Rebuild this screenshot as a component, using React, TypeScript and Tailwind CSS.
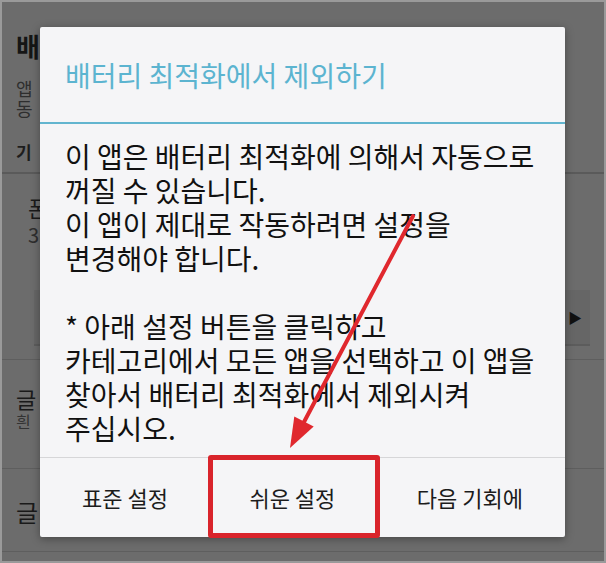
import React from "react";

const KR = { fontFamily: '"Noto Sans CJK KR", "Noto Sans", sans-serif' };

export default function App() {
  return (
    <div
      className="relative w-[606px] h-[563px] overflow-hidden bg-[#6c6c6c] border-2 border-[#9a9a9a]"
      style={KR}
    >
      {/* background page (dimmed) */}
      <div className="flex flex-col">
        <div className="pl-[14px] pt-[26px] pb-[10px] flex flex-col">
          <div className="text-[26px] font-bold leading-[36px] text-[#151515]">배</div>
          <div className="text-[18px] leading-[20px] text-[#2e2e2e] mt-[14px]">앱</div>
          <div className="text-[18px] leading-[20px] text-[#2e2e2e]">동</div>
          <div className="text-[17px] font-bold leading-[20px] text-[#1d1d1d] mt-[24px]">기</div>
        </div>
        <div className="h-[2px] bg-[#5a5a5a]" />
        <div className="pl-[26px] pr-[14px] pt-[18px] flex flex-col">
          <div className="text-[22px] leading-[30px] text-[#1a1a1a]">폰</div>
          <div className="text-[20px] leading-[26px] text-[#2e2e2e]">3</div>
          <div className="mt-[42px] ml-[6px] h-[56px] bg-[#666666] border-b-2 border-[#5c5c5c] flex items-center justify-end pr-[8px]">
            <span className="text-[14px] text-[#111]">▶</span>
          </div>
        </div>
        <div className="mt-[13px] h-[1px] bg-[#5e5e5e]" />
        <div className="pl-[14px] pt-[24px] pb-[38px] flex flex-col">
          <div className="text-[22px] leading-[28px] text-[#1a1a1a]">글</div>
          <div className="text-[16px] leading-[18px] text-[#333]">흰</div>
        </div>
        <div className="h-[1px] bg-[#5e5e5e]" />
        <div className="pl-[14px] pt-[28px] pb-[24px]">
          <div className="text-[24px] leading-[30px] text-[#1a1a1a]">글</div>
        </div>
        <div className="h-[1px] bg-[#5e5e5e]" />
      </div>

      {/* dialog */}
      <div className="absolute left-[38px] top-[25px] w-[525px] h-[510px] bg-[#f5f5f7] rounded-[2px] shadow-[0_2px_8px_rgba(0,0,0,0.35)] flex flex-col">
        <div className="h-[95px] flex items-center pl-[25px]">
          <span className="text-[28px] leading-[32px] text-[#5cb4d0]">배터리 최적화에서 제외하기</span>
        </div>
        <div className="h-[2px] bg-[#62b5cf]" />
        <div className="pt-[15px] pb-[12px] pl-[25px] text-[28px] leading-[34px] text-[#111111]">
          <div>이 앱은 배터리 최적화에 의해서 자동으로</div>
          <div>꺼질 수 있습니다.</div>
          <div>이 앱이 제대로 작동하려면 설정을</div>
          <div>변경해야 합니다.</div>
          <div>&nbsp;</div>
          <div>* 아래 설정 버튼을 클릭하고</div>
          <div>카테고리에서 모든 앱을 선택하고 이 앱을</div>
          <div>찾아서 배터리 최적화에서 제외시켜</div>
          <div>주십시오.</div>
        </div>
        <div className="h-[1px] bg-[#d6d6d8]" />
        <div className="flex-1 flex items-center justify-between px-[42px] text-[22px] text-[#1c1c1c]">
          <span>표준 설정</span>
          <span>쉬운 설정</span>
          <span>다음 기회에</span>
        </div>
      </div>

      {/* red annotation box */}
      <div className="absolute left-[206px] top-[453px] w-[172px] h-[83px] border-[5px] border-[#d9242b] rounded-[3px]" />

      {/* red arrow */}
      <svg className="absolute left-0 top-0" width="606" height="563" viewBox="-2 -2 606 563">
        <line x1="409" y1="212" x2="300" y2="418" stroke="#e0282e" strokeWidth="4" strokeLinecap="round" />
        <polygon points="286,444 309.7,422.6 290.3,412.4" fill="#e0282e" />
      </svg>
    </div>
  );
}
